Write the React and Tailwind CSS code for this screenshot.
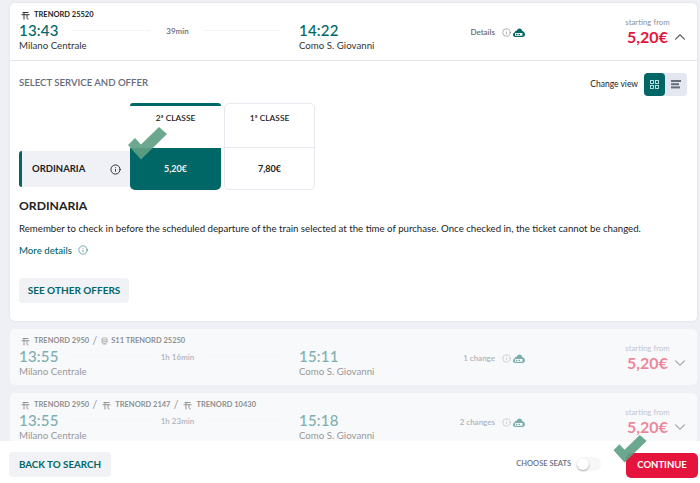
import { ChevronUp, ChevronDown, Info } from 'lucide-react';

const TrainIcon = () => (
  <svg width="9" height="9" viewBox="0 0 9 9" className="ml-[2px] mt-[1px] shrink-0" fill="none" stroke="#333" strokeWidth="1">
    <path d="M1.500 1.500h6M0.500 3.700h8M3 1.500v7M6 3.700v3c0 1 .6 1.400 1.500 1.400" />
  </svg>
);

const BusIcon = () => (
  <svg width="7" height="8" viewBox="0 0 8 9" className="ml-[1px] mt-[1px] shrink-0" fill="none" stroke="#555" strokeWidth="0.9">
    <rect x="1" y="1" width="6" height="6" rx="1" />
    <path d="M1 3.200h6M1 5h6M2 8h4" />
  </svg>
);

const Co2Cloud = () => (
  <svg width="12" height="9" viewBox="0 0 12 9" className="shrink-0">
    <path d="M2.300 9C1 9 0 8 0 6.700 0 5.600.7 4.800 1.700 4.500 1.900 3.300 2.800 2.500 3.900 2.500 4.400 1.200 5.400.4 6.500.4c1.500 0 2.600 1.100 2.700 2.500 1.600.3 2.800 1.900 2.800 3.600C12 8 10.800 9 9.500 9z" fill="#006666" />
    <rect x="2" y="5" width="7.500" height="2.800" fill="#fff" rx="0.500" />
    <rect x="3" y="5.800" width="1.500" height="1.200" fill="#006666" />
    <rect x="5.500" y="5.800" width="1.500" height="1.200" fill="#006666" />
  </svg>
);

const Check = ({ className }) => (
  <svg viewBox="0 0 40 33" className={className}>
    <path d="M0 18L7 11L13 17.500L31 0L39 7L13 32.500z" fill="#5f9f86" fillOpacity="0.92" />
  </svg>
);

const Dots = ({ w }) => <div className={`border-t border-dotted border-[#e8eaef] ${w}`} />;

const TrainName = ({ children, className = '' }) => (
  <span className={`text-[7.500px] font-bold leading-none text-[#222] ${className}`}>{children}</span>
);

const Slash = () => <span className="mx-[3px] text-[11px] leading-none text-[#333]">/</span>;

const Journey = ({ labels, dep, duration, arr, info, expanded }) => (
  <div className="flex h-[57px] items-stretch pl-[9px] pr-[11px]">
    <div className="flex flex-col">
      <div className="mt-[7px] flex h-[9px] items-center">{labels}</div>
      <div className="mt-[3px] flex items-center">
        <span className="w-[54px] text-[15px] font-medium leading-[17px] tracking-[0.2px] text-[#006666]">{dep}</span>
        <Dots w="w-[77px]" />
        <span className="w-[55px] text-center text-[8px] font-semibold text-[#666c7a]">{duration}</span>
        <Dots w="w-[75px]" />
        <span className="ml-[19px] text-[15px] font-medium leading-[17px] tracking-[0.2px] text-[#006666]">{arr}</span>
      </div>
      <div className="flex text-[9.700px] leading-[12px] text-[#333]">
        <span className="w-[280px]">Milano Centrale</span>
        <span>Como S. Giovanni</span>
      </div>
    </div>
    <div className="ml-auto flex items-center">
      <div className="mt-[1px] flex items-center">
        <span className="text-[8px] font-semibold text-[#666c7a]">{info}</span>
        <Info size={9} strokeWidth={1.2} className="ml-[7px] text-[#555]" />
        <span className="ml-[2px]"><Co2Cloud /></span>
      </div>
      <div className="ml-[102px] flex w-[41px] flex-col items-center">
        <span className="whitespace-nowrap text-[7.800px] leading-[10px] text-[#8a90a0]">starting from</span>
        <span className="text-[16px] font-bold leading-[19px] text-[#e4143c]">5,20€</span>
      </div>
      <span className="-mr-[3px] ml-[3px] mt-[11px] text-[#666]">
        {expanded ? <ChevronUp size={18} strokeWidth={1.5} /> : <ChevronDown size={18} strokeWidth={1.5} />}
      </span>
    </div>
  </div>
);

const OfferPanel = () => (
  <div className="border-t border-[#e2e4ea] px-[9px] pb-[18px] pt-[15px]">
    <div className="flex h-[15px] items-center justify-between pr-[1px]">
      <span className="text-[9.600px] font-semibold text-[#666c7a]">SELECT SERVICE AND OFFER</span>
      <div className="mt-[1px] flex items-center">
        <span className="mr-[6px] text-[8.500px] text-[#222]">Change view</span>
        <div className="flex h-[23px] w-[43px] rounded-[4px] bg-[#e4e7ef]">
          <div className="flex w-[21px] items-center justify-center rounded-[4px] bg-[#006666]">
            <svg width="9" height="9" viewBox="0 0 9 9" fill="none" stroke="#cfe5e5" strokeWidth="0.9">
              <rect x="0.500" y="0.500" width="3" height="3" />
              <rect x="5.500" y="0.500" width="3" height="3" />
              <rect x="0.500" y="5.500" width="3" height="3" />
              <rect x="5.500" y="5.500" width="3" height="3" />
            </svg>
          </div>
          <div className="flex flex-1 items-center justify-center">
            <svg width="11" height="9" viewBox="0 0 11 9" fill="#666c7a">
              <rect width="10" height="2" />
              <rect y="3.200" width="8" height="2" />
              <rect y="6.400" width="9" height="2" />
            </svg>
          </div>
        </div>
      </div>
    </div>

    <div className="mt-[12px] flex items-end">
      <div className="mb-[3px] flex h-[36px] w-[111px] items-center justify-between rounded-l-[3px] border-l-[3px] border-[#006666] bg-[#f0f1f6] pl-[10px] pr-[9px]">
        <span className="text-[9.500px] font-bold text-[#222]">ORDINARIA</span>
        <Info size={11} strokeWidth={2} className="text-[#222]" />
      </div>
      <div className="relative w-[91px]">
        <div className="flex h-[45px] justify-center rounded-t-[3px] border-t-[3px] border-[#006666] pt-[6px] text-[8.400px] font-semibold text-[#222]">2ª CLASSE</div>
        <div className="flex h-[42px] items-center justify-center rounded-b-[5px] bg-[#006666] text-[9px] font-bold text-[#f4f4f4]">5,20€</div>
        <Check className="absolute left-[-2px] top-[24px] h-[33px] w-[40px]" />
      </div>
      <div className="ml-[3px] w-[91px] rounded-[5px] border border-[#e8e9f0]">
        <div className="flex h-[44px] justify-center border-b border-[#e8e9f0] pt-[8px] text-[8.400px] font-semibold text-[#222]">1ª CLASSE</div>
        <div className="flex h-[41px] items-center justify-center text-[9px] font-bold text-[#222]">7,80€</div>
      </div>
    </div>

    <h3 className="mt-[8px] text-[12.200px] font-bold leading-[16px] text-[#222]">ORDINARIA</h3>
    <p className="mt-[8px] whitespace-nowrap text-[9.660px] leading-[12px] text-[#222]">
      Remember to check in before the scheduled departure of the train selected at the time of purchase. Once checked in, the ticket cannot be changed.
    </p>
    <div className="mt-[10px] flex items-center text-[9.660px] font-medium leading-[12px] text-[#006666]">
      More details
      <Info size={10} strokeWidth={1.3} className="ml-[6px]" />
    </div>
    <button className="mt-[22px] block h-[25px] w-[110px] rounded-[4px] bg-[#f0f2f6] text-[10px] font-bold text-[#006666]">
      SEE OTHER OFFERS
    </button>
  </div>
);

export default function App() {
  return (
    <div className="flex h-[483px] w-[700px] flex-col overflow-hidden bg-[#eef0f5] font-['Lato',sans-serif]">
      <main className="flex-1 overflow-hidden pl-[10px] pr-[3px] pt-[3px]">
        <section className="rounded-[5px] bg-white shadow-[0_0_3px_rgba(0,0,0,0.08)]">
          <Journey
            expanded
            dep="13:43"
            arr="14:22"
            duration="39min"
            info="Details"
            labels={<><TrainIcon /><TrainName className="ml-[4px]">TRENORD 25520</TrainName></>}
          />
          <OfferPanel />
        </section>

        <section className="mt-[8px] h-[56px] rounded-[5px] bg-white/60">
          <div className="opacity-50">
            <Journey
              dep="13:55"
              arr="15:11"
              duration="1h 16min"
              info="1 change"
              labels={<><TrainIcon /><TrainName className="ml-[4px]">TRENORD 2950</TrainName><Slash /><BusIcon /><TrainName className="ml-[3px]">S11 TRENORD 25250</TrainName></>}
            />
          </div>
        </section>

        <section className="mt-[8px] rounded-[5px] bg-white/60">
          <div className="opacity-50">
            <Journey
              dep="13:55"
              arr="15:18"
              duration="1h 23min"
              info="2 changes"
              labels={<><TrainIcon /><TrainName className="ml-[4px]">TRENORD 2950</TrainName><Slash /><TrainIcon /><TrainName className="ml-[4px]">TRENORD 2147</TrainName><Slash /><TrainIcon /><TrainName className="ml-[4px]">TRENORD 10430</TrainName></>}
            />
          </div>
        </section>
      </main>

      <footer className="relative z-10 flex h-[42px] shrink-0 items-center bg-white pl-[9px] pr-[2px] pt-[4px]">
        <button className="h-[25px] w-[102px] rounded-[4px] bg-[#f0f2f6] text-[9.800px] font-bold text-[#006666]">
          BACK TO SEARCH
        </button>
        <div className="ml-auto flex items-center">
          <span className="text-[7.500px] font-semibold text-[#666c7a]">CHOOSE SEATS</span>
          <div className="ml-[6px] flex h-[14px] w-[24px] items-center rounded-full bg-[#f6f7f9]">
            <div className="h-[12px] w-[12px] rounded-full bg-white shadow-[0_1px_2px_rgba(0,0,0,0.35)]" />
          </div>
          <div className="relative ml-[25px]">
            <button className="h-[25px] w-[72px] rounded-[5px] bg-[#e4143c] text-[9.500px] font-bold text-white">
              CONTINUE
            </button>
            <Check className="absolute left-[-13px] top-[-15px] h-[28px] w-[35px]" />
          </div>
        </div>
      </footer>
    </div>
  );
}
